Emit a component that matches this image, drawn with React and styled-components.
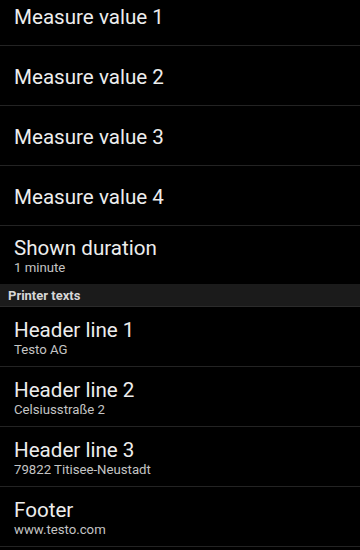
import React from "react";
import styled, { createGlobalStyle } from "styled-components";

const Global = createGlobalStyle`
  html, body { margin: 0; padding: 0; background: #000; }
  body { font-family: Roboto, "Noto Sans", sans-serif; -webkit-font-smoothing: antialiased; }
`;

const Screen = styled.div`
  width: 360px;
  height: 550px;
  overflow: hidden;
  background: #000;
`;

const List = styled.div`
  display: flex;
  flex-direction: column;
  margin-top: -14px;
`;

const Row = styled.div`
  box-sizing: border-box;
  height: ${(p) => (p.$last ? 58 : 60)}px;
  border-bottom: ${(p) => (p.$last ? "none" : "1px solid #232323")};
  display: flex;
  flex-direction: column;
  justify-content: center;
  padding: 2px 14px 0;
`;

const Title = styled.div`
  font-size: 20.6px;
  line-height: 24px;
  color: #ededed;
`;

const Summary = styled.div`
  font-size: 13.2px;
  line-height: 16px;
  color: #c4c4c4;
`;

const Category = styled.div`
  height: 23px;
  box-sizing: border-box;
  background: #1b1b1b;
  border-bottom: 1px solid #2b2b2b;
  display: flex;
  align-items: center;
  padding: 0 8px;
  font-size: 13px;
  font-weight: 700;
  color: #d6d6d6;
`;

const Item = ({ title, summary, last }) => (
  <Row $last={last}>
    <Title>{title}</Title>
    {summary && <Summary>{summary}</Summary>}
  </Row>
);

export default function App() {
  return (
    <Screen>
      <Global />
      <List>
        <Item title="Measure value 1" />
        <Item title="Measure value 2" />
        <Item title="Measure value 3" />
        <Item title="Measure value 4" />
        <Item title="Shown duration" summary="1 minute" last />
        <Category>Printer texts</Category>
        <Item title="Header line 1" summary="Testo AG" />
        <Item title="Header line 2" summary="Celsiusstraße 2" />
        <Item title="Header line 3" summary="79822 Titisee-Neustadt" />
        <Item title="Footer" summary="www.testo.com" />
      </List>
    </Screen>
  );
}
